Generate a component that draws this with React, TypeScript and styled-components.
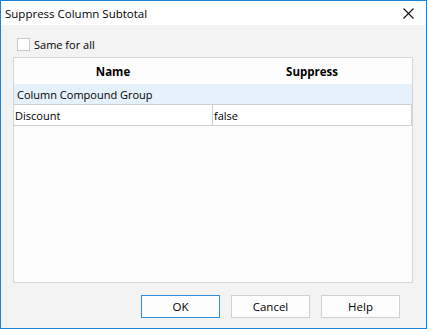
import * as React from "react";
import styled, { createGlobalStyle } from "styled-components";

const GlobalStyle = createGlobalStyle`
  html, body {
    margin: 0;
    padding: 0;
    background: #f3f3f3;
  }
  * {
    box-sizing: border-box;
  }
`;

const Window = styled.div`
  width: 427px;
  height: 329px;
  border: 1px solid #1883d7;
  display: flex;
  flex-direction: column;
  background: #f3f3f3;
  font-family: "Open Sans", "Noto Sans", sans-serif;
  font-size: 11px;
  color: #000;
`;

const TitleBar = styled.div`
  height: 25px;
  background: #ffffff;
  display: flex;
  align-items: center;
  justify-content: space-between;
  padding: 0 12px 0 4px;
`;

const Title = styled.span`
  font-size: 11.5px;
`;

const CloseButton = styled.button`
  border: none;
  background: transparent;
  padding: 0;
  width: 12px;
  height: 12px;
  display: flex;
  align-items: center;
  justify-content: center;
`;

const Content = styled.div`
  flex: 1;
  display: flex;
  flex-direction: column;
  padding: 12px 13px 10px 12px;
`;

const CheckRow = styled.label`
  display: flex;
  align-items: center;
  gap: 4px;
  padding-left: 4px;
  height: 14px;
`;

const Checkbox = styled.span`
  width: 13px;
  height: 13px;
  border: 1px solid #c9c9c9;
  background: #ffffff;
`;

const Grid = styled.div`
  margin-top: 6px;
  height: 226px;
  border: 1px solid #d5d5d5;
  background: #fdfdfd;
  display: flex;
  flex-direction: column;
`;

const HeaderRow = styled.div`
  height: 26px;
  display: grid;
  grid-template-columns: 198px 1fr;
  align-items: center;
`;

const HeaderCell = styled.div`
  text-align: center;
  font-weight: bold;
  font-size: 11.5px;
`;

const GroupRow = styled.div`
  height: 20px;
  background: #e5f1fb;
  display: flex;
  align-items: center;
  padding-left: 3px;
`;

const DataRow = styled.div`
  height: 22px;
  display: grid;
  grid-template-columns: 199px 199px;
  border-top: 1px solid #d0d0d0;
  border-bottom: 1px solid #d0d0d0;
  background: #ffffff;
`;

const DataCell = styled.div`
  display: flex;
  align-items: center;
  padding-left: 1px;
  border-right: 1px solid #d0d0d0;
`;

const ButtonRow = styled.div`
  display: flex;
  justify-content: flex-end;
  gap: 11px;
  margin-top: 12px;
  padding-right: 13px;
`;

const Button = styled.button<{ $primary?: boolean }>`
  width: 79px;
  height: 23px;
  background: #fdfdfd;
  border: 1px solid ${p => (p.$primary ? "#2f8fdb" : "#d0d0d0")};
  font-family: "Open Sans", "Noto Sans", sans-serif;
  font-size: 11.5px;
  color: #000;
  padding: 0;
`;

export default function App() {
  return (
    <>
      <GlobalStyle />
      <Window>
        <TitleBar>
          <Title>Suppress Column Subtotal</Title>
          <CloseButton title="Close">
            <svg width="11" height="11" viewBox="0 0 11 11">
              <path d="M0.5 0.5 L10.5 10.5 M10.5 0.5 L0.5 10.5" stroke="#111" strokeWidth="1.1" />
            </svg>
          </CloseButton>
        </TitleBar>
        <Content>
          <CheckRow>
            <Checkbox />
            <span>Same for all</span>
          </CheckRow>
          <Grid>
            <HeaderRow>
              <HeaderCell>Name</HeaderCell>
              <HeaderCell>Suppress</HeaderCell>
            </HeaderRow>
            <GroupRow>Column Compound Group</GroupRow>
            <DataRow>
              <DataCell>Discount</DataCell>
              <DataCell>false</DataCell>
            </DataRow>
          </Grid>
          <ButtonRow>
            <Button $primary>OK</Button>
            <Button>Cancel</Button>
            <Button>Help</Button>
          </ButtonRow>
        </Content>
      </Window>
    </>
  );
}
